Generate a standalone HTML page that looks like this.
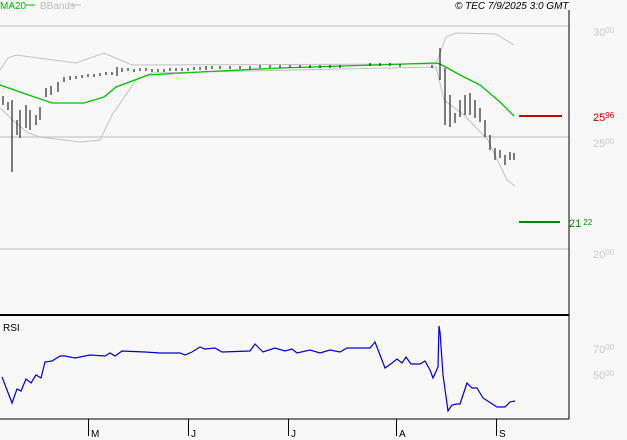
<!DOCTYPE html><html><head><style>body{margin:0;background:#f8f8f8}svg{display:block}text{font-family:"Liberation Sans",sans-serif}</style></head><body>
<svg width="627" height="440" viewBox="0 0 627 440" xmlns="http://www.w3.org/2000/svg">
<rect width="627" height="440" fill="#f8f8f8"/>
<g stroke="#c8c8c8" stroke-width="1.2"><line x1="0" y1="26" x2="569" y2="26"/><line x1="0" y1="137" x2="569" y2="137"/><line x1="0" y1="249" x2="569" y2="249"/></g>
<g fill="none" stroke="#c0c0c0" stroke-width="1">
<polyline points="0,70 8,58 16,55 76,63 104,53 132,65 436,64 446,37 456,33 496,34 514,45"/>
<polyline points="0,108 16,123 28,133 40,137 80,142 100,140 112,115 136,80 152,73 200,72 436,67 444,100 464,115 488,140 507,180 515,186"/>
</g>
<polyline fill="none" stroke="#00c000" stroke-width="1.3" points="0,85 20,92 52,103 84,103 104,97 116,87 148,75 200,72 280,68 436,63 440,64 460,75 480,85 500,102 514,116"/>
<path stroke="#000" stroke-width="1" fill="none" d="M3,96V105M8,102V110M12,100V172M17,120V135M20,110V138M26,105V128M30,110V130M36,115V125M40,107V120M46,88V97M51,86V95M58,82V92M64,77V82M70,76V80M76,76V79M82,75V78M88,74V77M94,74V77M100,73V76M106,72V75M112,72V75M117,67V76M122,68V72M128,68V71M134,69V72M140,68V71M146,68V71M152,69V72M158,69V72M164,69V72M170,68V71M176,68V71M182,68V71M188,68V71M194,67V70M200,67V70M206,66V70M212,66V69M220,66V69M230,66V69M240,66V69M250,66V69M260,65V68M270,65V68M280,65V68M290,65V68M300,65V68M310,65V68M320,65V68M330,65V68M340,65V68M370,63V66M380,63V66M390,63V66M400,64V67M432,65V68M440,48V80M445,68V125M450,95V127M455,113V123M460,100V117M465,95V115M470,93V115M475,100V118M480,108V122M485,120V137M490,135V150M495,148V160M500,150V158M505,155V165M510,152V160M514,153V160"/>
<rect x="519" y="115" width="43" height="2" fill="#cc0000"/>
<rect x="519" y="221" width="41" height="2" fill="#008800"/>
<line x1="569" y1="10" x2="569" y2="419" stroke="#000" stroke-width="1"/>
<line x1="0" y1="315" x2="569" y2="315" stroke="#000" stroke-width="2"/>
<line x1="0" y1="419" x2="569" y2="419" stroke="#000" stroke-width="1"/>
<g stroke="#000"><line x1="88.5" y1="419" x2="88.5" y2="436"/><line x1="188.5" y1="419" x2="188.5" y2="436"/><line x1="288.5" y1="419" x2="288.5" y2="436"/><line x1="396.5" y1="419" x2="396.5" y2="436"/><line x1="496.5" y1="419" x2="496.5" y2="436"/></g>
<g font-size="10" fill="#000"><text x="91" y="437">M</text><text x="191" y="437">J</text><text x="291" y="437">J</text><text x="399" y="437">A</text><text x="499" y="437">S</text></g>
<polyline fill="none" stroke="#0000cc" stroke-width="1.2" points="2,377 12,403 17,389 21,391 26,379 31,383 36,375 41,378 45,362 52,361 60,356 65,356 75,358 90,355 105,356 110,353 115,356 122,351 145,352 160,353 180,353 185,355 192,352 200,347 205,349 215,348 222,352 250,351 255,344 263,352 275,348 285,351 292,349 297,353 310,350 320,353 330,350 340,352 347,348 370,348 375,342 380,355 385,368 392,363 397,359 402,363 406,357 411,364 420,364 425,361 430,370 433,378 438,367 439,326 440,332 443,375 448,411 452,405 457,404 460,404 467,383 472,388 477,388 483,398 497,407 505,407 510,402 515,401"/>
<text x="3" y="331" font-size="10" fill="#000">RSI</text>
<text x="0" y="9" font-size="10" fill="#00bb00">MA20</text><line x1="26" y1="5" x2="35" y2="5" stroke="#00bb00" stroke-width="1"/>
<text x="40" y="9" font-size="10" fill="#bbb">BBands</text><line x1="72" y1="5" x2="81" y2="5" stroke="#bbb"/>
<text x="455" y="9" font-size="10" font-style="italic" fill="#000">© TEC 7/9/2025 3:0 GMT</text>
<g fill="#c8c8c8" font-size="11"><text x="593" y="36">30<tspan font-size="8" dy="-3">00</tspan></text><text x="593" y="147">25<tspan font-size="8" dy="-3">00</tspan></text><text x="593" y="258">20<tspan font-size="8" dy="-3">00</tspan></text><text x="593" y="353">70<tspan font-size="8" dy="-3">00</tspan></text><text x="593" y="379">50<tspan font-size="8" dy="-3">00</tspan></text></g>
<text x="593" y="121" font-size="11" fill="#cc0000">25<tspan font-size="8" dy="-3">96</tspan></text>
<text x="569" y="227" font-size="11" fill="#008800">21<tspan font-size="8" dy="-2" dx="2">22</tspan></text>
</svg></body></html>
